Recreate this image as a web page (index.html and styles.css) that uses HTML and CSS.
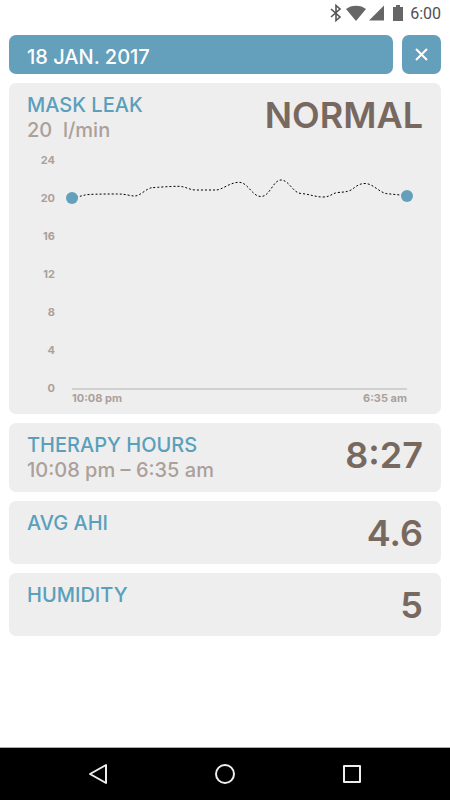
FILE: index.html
```html
<!DOCTYPE html>
<html lang="en">
<head>
    <meta charset="UTF-8">
    <meta name="viewport" content="width=device-width, initial-scale=1.0">
    <title>Therapy Details</title>
    <link rel="stylesheet" href="styles.css">
</head>
<body>
    <div class="status-bar">
        <svg class="bluetooth" width="12" height="18" viewBox="0 0 12 18" aria-hidden="true">
            <path d="M1 5 L10 13 L6 16.5 V1.5 L10 5 L1 13" />
        </svg>
        <svg width="20" height="18" viewBox="0 0 20 18" aria-hidden="true">
            <path d="M0 5 C5 0.5 15 0.5 20 5 L10 17 Z" />
        </svg>
        <svg class="signal" width="15" height="18" viewBox="0 0 15 18" aria-hidden="true">
            <path d="M15 1.5 V16.5 H0 Z" />
        </svg>
        <svg class="battery" width="10" height="18" viewBox="0 0 10 18" aria-hidden="true">
            <path d="M3 1 H7 V3 H10 V17 H0 V3 H3 Z" />
        </svg>
        <span class="clock">6:00</span>
    </div>

    <main class="content">
        <header class="header">
            <h1 class="date">18 JAN. 2017</h1>
            <button class="close" type="button" aria-label="Close">
                <svg width="13" height="13" viewBox="0 0 13 13" aria-hidden="true">
                    <path d="M1 1 L12 12 M12 1 L1 12" />
                </svg>
            </button>
        </header>

        <section class="card">
            <div class="summary">
                <div>
                    <h2 class="title">MASK LEAK</h2>
                    <p class="detail">20&nbsp; l/min</p>
                </div>
                <div class="value">NORMAL</div>
            </div>
            <div class="chart">
                <!-- l/min scale -->
                <div class="scale">
                    <span>24</span>
                    <span>20</span>
                    <span>16</span>
                    <span>12</span>
                    <span>8</span>
                    <span>4</span>
                    <span>0</span>
                </div>
                <div class="plot">
                    <svg class="graph" viewBox="0 0 335 238" preserveAspectRatio="none" role="img" aria-label="Mask leak over the night">
                        <path class="axis" d="M0 236 H335" />
                        <path class="leak" d="M0 45 C8 44 10 42 17 41.5 S38 41 46 41 S58 43 63 43 S75 35 80 34.7 S98 33.3 106 33.3 S117 37 124 37 S138 37 144 37 S158 29.3 167 29.3 S180 43.5 189 43.5 S201 27 209 27 S221 40 229 40.5 S243 44 251 44 S260 40 266 39.5 S274 39 278 37.5 S285 30.5 293 30.5 S308 40 315 40.7 S330 42 335 43" />
                        <!-- start and end points -->
                        <path class="point" d="M0 45 h0" />
                        <path class="point" d="M335 43 h0" />
                    </svg>
                    <div class="times">
                        <span>10:08 pm</span>
                        <span>6:35 am</span>
                    </div>
                </div>
            </div>
        </section>

        <section class="card summary">
            <div>
                <h2 class="title">THERAPY HOURS</h2>
                <p class="detail">10:08 pm – 6:35 am</p>
            </div>
            <div class="value">8:27</div>
        </section>

        <section class="card summary">
            <h2 class="title">AVG AHI</h2>
            <div class="value">4.6</div>
        </section>

        <section class="card summary">
            <h2 class="title">HUMIDITY</h2>
            <div class="value">5</div>
        </section>
    </main>

    <nav class="nav-bar">
        <button type="button" aria-label="Back">
            <svg width="22" height="22" viewBox="0 0 22 22"><path d="M19 2 V20 L3 11 Z" /></svg>
        </button>
        <button type="button" aria-label="Home">
            <svg width="22" height="22" viewBox="0 0 22 22"><circle cx="11" cy="11" r="9" /></svg>
        </button>
        <button type="button" aria-label="Recent apps">
            <svg width="22" height="22" viewBox="0 0 22 22"><rect x="3" y="3" width="16" height="16" /></svg>
        </button>
    </nav>
</body>
</html>
```

FILE: styles.css
```css
* {
    margin: 0;
    padding: 0;
    box-sizing: border-box;
}
body {
    font-family: Inter, "Liberation Sans", sans-serif;
    font-weight: 500;
    background: #fff;
    min-height: 100vh;
    display: flex;
    flex-direction: column;
}
svg {
    display: block;
}
button {
    border: none;
    background: none;
    display: flex;
    justify-content: center;
    align-items: center;
    cursor: pointer;
}

/* Status bar */
.status-bar {
    height: 35px;
    padding: 4px 9px 0;
    display: flex;
    justify-content: flex-end;
    gap: 3px;
    fill: #666;
    color: #505050;
}
.bluetooth {
    margin-right: 1px;
    fill: none;
    stroke: #555;
    stroke-width: 1.6;
}
.signal {
    margin-right: 6px;
}
.battery {
    margin-right: 4px;
}
.clock {
    font: 400 16px/20px Roboto, sans-serif;
}

/* Main column */
.content {
    flex: 1;
    padding: 0 9px 9px;
    display: flex;
    flex-direction: column;
    gap: 9px;
}
.header {
    display: flex;
    gap: 9px;
}
.date {
    flex: 1;
    padding: 5px 18px 0;
    border-radius: 7px;
    background: #64a0bb;
    color: #fff;
    font-size: 20px;
    font-weight: 500;
    line-height: 34px;
}
.close {
    width: 39px;
    border-radius: 7px;
    background: #64a0bb;
}
.close svg {
    fill: none;
    stroke: #fff;
    stroke-width: 2;
}
.card {
    padding: 10px 18px 9px;
    border-radius: 7px;
    background: #eee;
}
.summary {
    display: flex;
    justify-content: space-between;
    align-items: flex-start;
}
.title {
    color: #5a9fbb;
    font-size: 20px;
    font-weight: 500;
    line-height: 25px;
}
.detail {
    color: #aba09a;
    font-size: 20px;
    line-height: 25px;
}
.value {
    color: #786960;
    font-size: 36px;
    font-weight: 600;
    line-height: 44px;
}

/* Chart */
.chart {
    margin-top: 10px;
    padding-right: 16px;
    display: flex;
    align-items: flex-start;
    gap: 17px;
    color: #aba09a;
    font-size: 11px;
    font-weight: 700;
    line-height: 14px;
}
.scale {
    width: 28px;
    height: 242px;
    display: flex;
    flex-direction: column;
    justify-content: space-between;
    text-align: right;
}
.plot {
    flex: 1;
}
.graph {
    width: 100%;
    height: 238px;
    overflow: visible;
    fill: none;
}
.graph path {
    vector-effect: non-scaling-stroke;
}
.axis {
    stroke: #d0d0d0;
    stroke-width: 2;
}
.leak {
    stroke: #000;
    stroke-width: 1;
    stroke-dasharray: 2 2;
}
.point {
    stroke: #64a0bb;
    stroke-width: 12;
    stroke-linecap: round;
}
.times {
    display: flex;
    justify-content: space-between;
}

/* Navigation bar */
.nav-bar {
    height: 53px;
    padding: 0 34px;
    border-top: 1px solid #aaa;
    background: #000;
    display: flex;
    justify-content: space-around;
}
.nav-bar button {
    width: 48px;
}
.nav-bar svg {
    fill: none;
    stroke: #eee;
    stroke-width: 2;
    stroke-linejoin: round;
}
```
